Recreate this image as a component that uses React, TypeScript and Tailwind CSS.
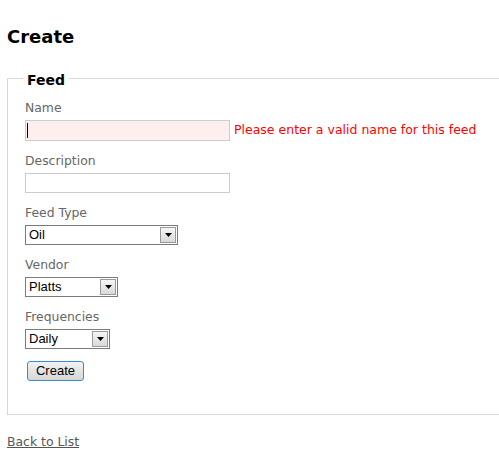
const Select = ({ value, className }: { value: string; className: string }) => (
  <div
    className={`flex h-[20px] items-stretch border border-[#7b7b7b] bg-white p-[1px] ${className}`}
  >
    <span className="flex-1 pl-[2px] font-['Liberation_Sans',Arial,sans-serif] text-[13px] leading-[16px] text-black">
      {value}
    </span>
    <span className="flex w-[16px] items-center justify-center border border-[#9a9a9a] bg-gradient-to-b from-[#f6f6f6] to-[#d9d9d9]">
      <svg width="7" height="4" viewBox="0 0 7 4">
        <path d="M0 0h7L3.5 4z" fill="#000" />
      </svg>
    </span>
  </div>
);

const Label = ({ children }: { children: string }) => (
  <div className="mb-[3px] text-[12.4px] leading-[19px] text-[#666]">{children}</div>
);

export default function App() {
  return (
    <div className="min-h-[460px] overflow-hidden bg-white px-[7px] font-['DejaVu_Sans',Verdana,sans-serif]">
      <h2 className="pt-[26px] text-[18px] font-bold leading-[22px] text-black">Create</h2>

      <fieldset className="mt-[20px] w-[540px] border border-[#d9d9d9] pb-[32px] pl-[17px] pt-[9px]">
        <legend className="-ml-[2px] px-[4px] pt-[4px] text-[14px] font-bold leading-[17px] text-black">
          Feed
        </legend>

        <Label>Name</Label>
        <div className="flex items-center">
          <div className="flex h-[21px] w-[205px] items-center border border-[#cccccc] bg-[#ffeeee] pl-[1px]">
            <span className="h-[15px] w-[1px] bg-black" />
          </div>
          <span className="ml-[4px] text-[12.5px] text-[#ff0000]">
            Please enter a valid name for this feed
          </span>
        </div>

        <div className="mt-[10px]">
          <Label>Description</Label>
          <div className="h-[20px] w-[205px] border border-[#cccccc] bg-white" />
        </div>

        <div className="mt-[10px]">
          <Label>Feed Type</Label>
          <Select value="Oil" className="w-[153px]" />
        </div>

        <div className="mt-[10px]">
          <Label>Vendor</Label>
          <Select value="Platts" className="w-[93px]" />
        </div>

        <div className="mt-[10px]">
          <Label>Frequencies</Label>
          <Select value="Daily" className="w-[85px]" />
        </div>

        <button className="ml-[2px] mt-[12px] h-[20px] w-[57px] rounded-[3px] border border-[#3c8dc5] bg-gradient-to-b from-[#f2f2f2] to-[#d6d6d6] font-['Liberation_Sans',Arial,sans-serif] text-[13px] leading-[16px] text-black">
          Create
        </button>
      </fieldset>

      <div className="mt-[14px]">
        <a href="#" className="text-[12.4px] leading-[16px] text-[#555] underline">
          Back to List
        </a>
      </div>
    </div>
  );
}
